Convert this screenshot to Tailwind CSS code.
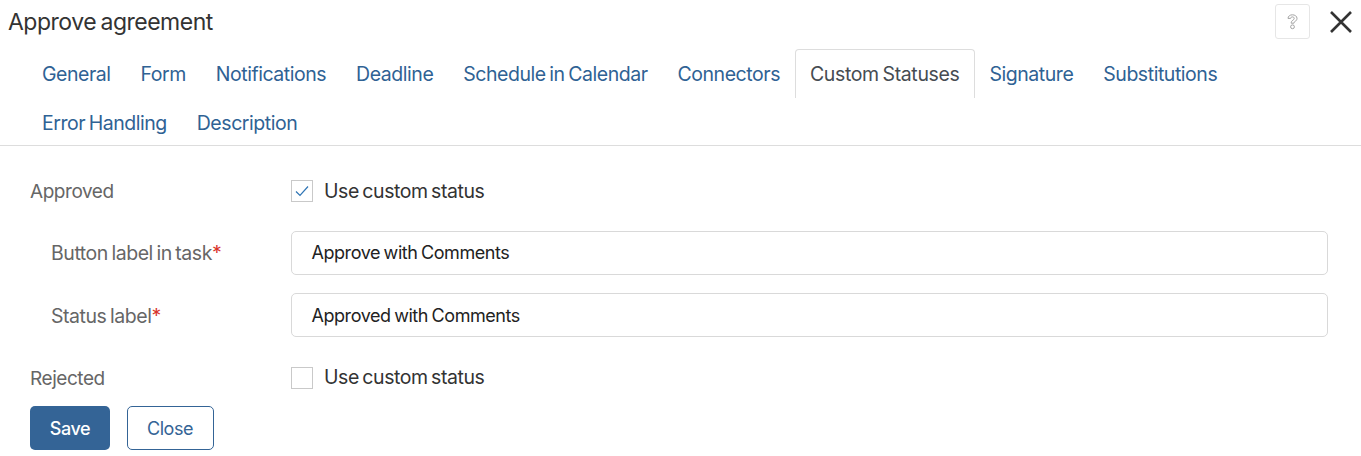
<!DOCTYPE html>
<html><head><meta charset="utf-8"><script src="https://cdn.jsdelivr.net/npm/@tailwindcss/browser@4"></script></head>
<body class="bg-white">
<div class="w-[1361px] h-[456px] overflow-hidden bg-white font-['Inter',sans-serif] text-[19.5px] leading-[24px] tracking-[-0.45px] [word-spacing:-1.5px]">
  <header class="h-[49px] flex items-start justify-between pl-[8px] pr-[8px]">
    <h1 class="text-[23px] leading-[28px] mt-[8px] text-[#333] font-normal tracking-[-0.5px]">Approve agreement</h1>
    <div class="flex items-center gap-[19px] mt-[4px]">
      <button class="w-[35px] h-[35px] border border-[#e6e6e6] rounded-[3px] flex items-center justify-center">
        <svg width="11" height="16" viewBox="0 0 11 16" fill="none" stroke="#a3a3a3" stroke-width="1"><path d="M1 4.4C1 2.2 3 .8 5.4 .8S10 2.2 10 4.3c0 1.6-.9 2.5-2 3.2-.8.5-1.1.9-1.1 1.7H4.2c0-1.5.6-2.3 1.7-3 .8-.5 1.3-1 1.3-1.8 0-.9-.8-1.5-1.800-1.500S3.600 3.600 3.600 4.400Z"/><circle cx="5.500" cy="12.800" r="1.900"/></svg>
      </button>
      <button class="w-[24px] h-[24px] flex items-center justify-center">
        <svg width="24" height="24" viewBox="0 0 24 24" fill="none" stroke="#333" stroke-width="2.6"><path d="M2 2l20 20M22 2L2 22"/></svg>
      </button>
    </div>
  </header>
  <nav class="border-b border-[#ddd] pl-[27px] h-[97px] flex flex-wrap content-start text-[#2f6294]">
    <a class="h-[49px] px-[14.95px] flex items-center pt-[1px]">General</a>
    <a class="h-[49px] px-[14.95px] flex items-center pt-[1px]">Form</a>
    <a class="h-[49px] px-[14.95px] flex items-center pt-[1px]">Notifications</a>
    <a class="h-[49px] px-[14.95px] flex items-center pt-[1px]">Deadline</a>
    <a class="h-[49px] px-[14.95px] flex items-center pt-[1px]">Schedule in Calendar</a>
    <a class="h-[49px] px-[14.95px] flex items-center pt-[1px]">Connectors</a>
    <a class="h-[49px] px-[14px] flex items-center text-[#464c52] border border-b-0 border-[#ddd] rounded-t-[4px] tracking-[-0.35px]">Custom Statuses</a>
    <a class="h-[49px] px-[14.95px] flex items-center pt-[1px]">Signature</a>
    <a class="h-[49px] px-[14.95px] flex items-center pt-[1px]">Substitutions</a>
    <div class="w-full"></div>
    <a class="h-[48px] px-[14.95px] flex items-center pt-[1px]">Error Handling</a>
    <a class="h-[48px] px-[14.95px] flex items-center pt-[1px]">Description</a>
  </nav>
  <main class="px-[30px] pr-[33px] text-[#666]">
    <div class="flex items-center h-[22px] mt-[34px]">
      <span class="w-[261px] text-[19px] pt-[1px]">Approved</span>
      <span class="w-[22px] h-[22px] border border-[#c9c9c9] flex items-center justify-center">
        <svg width="14" height="12" viewBox="0 0 14 12" fill="none" stroke="#2f75b5" stroke-width="1.2"><path d="M1 6.5l4 4L13 1.5"/></svg>
      </span>
      <span class="ml-[11px] text-[#333]">Use custom status</span>
    </div>
    <div class="flex items-center h-[44px] mt-[29px]">
      <span class="w-[261px] pl-[21px]">Button label in task<span class="text-[#d9342b]">*</span></span>
      <div class="flex-1 h-[44px] border border-[#d9d9d9] rounded-[5px] pl-[19.5px] flex items-center text-[18px] text-[#222] [word-spacing:-1px]">Approve with Comments</div>
    </div>
    <div class="flex items-center h-[44px] mt-[18px]">
      <span class="w-[261px] pl-[21px] pt-[2px]">Status label<span class="text-[#d9342b]">*</span></span>
      <div class="flex-1 h-[44px] border border-[#d9d9d9] rounded-[5px] pl-[19.5px] pt-[1px] flex items-center text-[18px] text-[#222] [word-spacing:-1px]">Approved with Comments</div>
    </div>
    <div class="flex items-center h-[22px] mt-[30px]">
      <span class="w-[261px] text-[19px] pt-[1px]">Rejected</span>
      <span class="w-[22px] h-[22px] border border-[#c9c9c9]"></span>
      <span class="ml-[11px] -mt-[2px] text-[#333]">Use custom status</span>
    </div>
    <div class="flex gap-[17px] mt-[17px]">
      <button class="w-[80px] h-[44px] pt-[1px] rounded-[5px] bg-[#346496] text-white font-medium text-[18px]">Save</button>
      <button class="w-[87px] h-[44px] pt-[1px] pr-[1px] rounded-[5px] border border-[#346496] text-[#346496] text-[18px]">Close</button>
    </div>
  </main>
</div>
</body></html>
